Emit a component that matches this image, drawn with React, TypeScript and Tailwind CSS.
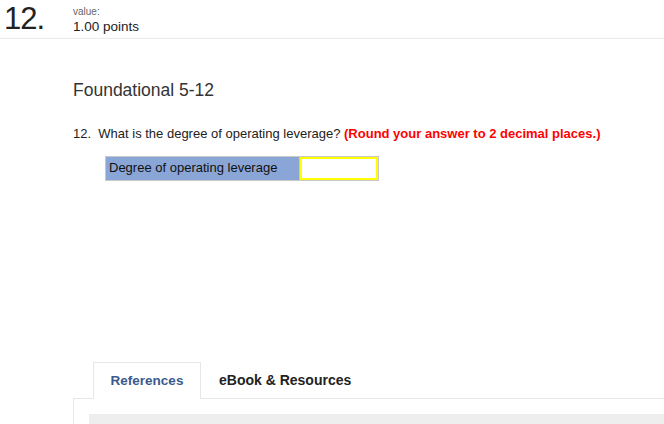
import React from 'react';

export default function App() {
  return (
    <div className="w-[664px] h-[424px] overflow-hidden bg-white text-[#333]" style={{ fontFamily: '"Liberation Sans", Arial, sans-serif' }}>
      {/* header */}
      <header className="h-[39px] flex items-start border-b border-[#ebebeb]">
        <div className="w-[73px] pl-[4px] pt-[3px] text-[31px] leading-[32px] text-[#222] tracking-[-1px]">12.</div>
        <div className="pt-[6px]">
          <p className="text-[10px] leading-[11px] text-[#666]">value:</p>
          <p className="text-[13.5px] leading-[16px] text-[#222] mt-[2px]">1.00 points</p>
        </div>
      </header>

      <main className="pl-[73px]">
        <h2 className="mt-[41px] text-[17.5px] leading-[20px] text-[#333]">Foundational 5-12</h2>

        <p className="mt-[25px] text-[13px] leading-[17px] text-[#222]">
          12.&nbsp; What is the degree of operating leverage?{' '}
          <span className="font-bold text-[#f00]">(Round your answer to 2 decimal places.)</span>
        </p>

        <div className="mt-[14px] ml-[32px] flex w-[274px] h-[25px] border border-[#c8c8c8]">
          <div className="w-[194px] bg-[#8aa6d6] border-r border-[#c8c8c8] pl-[3px] text-[13px] leading-[22px] text-[#111]">
            Degree of operating leverage
          </div>
          <input className="flex-1 min-w-0 border-2 border-[#ffff00] bg-white outline-none text-[12px]" />
        </div>

        {/* tabs */}
        <div className="mt-[181px] flex pl-[20px] relative z-10">
          <div className="w-[108px] h-[37px] border border-b-0 border-[#e6e6e6] bg-white flex items-center justify-center text-[13.5px] font-bold text-[#3c5a8e]">
            References
          </div>
          <div className="h-[37px] pl-[18px] flex items-center text-[14px] font-bold text-[#222]">eBook &amp; Resources</div>
        </div>
        <div className="-mt-px border-t border-l border-[#e6e6e6] pl-[15px] pt-[15px]">
          <div className="h-[20px] bg-[#eeeeee]" />
        </div>
      </main>
    </div>
  );
}
